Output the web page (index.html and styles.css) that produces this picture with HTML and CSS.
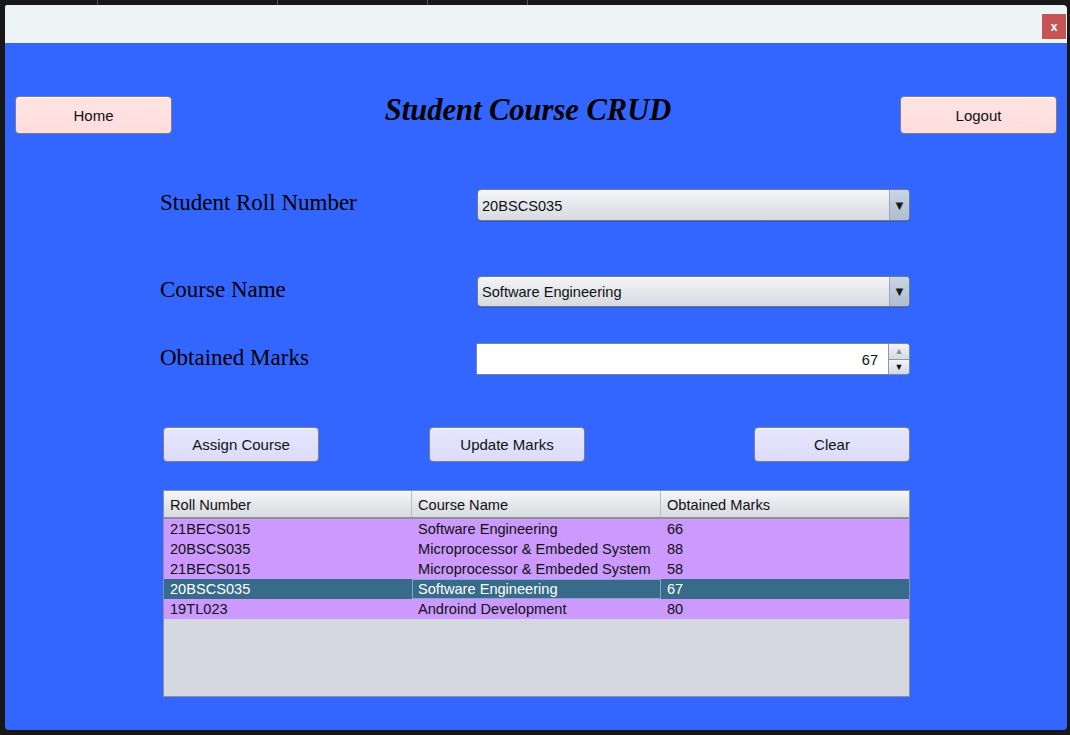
FILE: index.html
```html
<!DOCTYPE html>
<html>
<head>
<meta charset="utf-8">
<link rel="stylesheet" href="styles.css">
</head>
<body>
<div class="behind">
  <span class="seg s1"></span><span class="seg s2"></span><span class="seg s3"></span><span class="seg s4"></span><span class="seg s5"></span>
</div>
<div class="window">
  <div class="titlebar">
    <div class="close">x</div>
  </div>
  <div class="content">
    <div class="topbar">
      <button class="btn pink">Home</button>
      <h1 class="title">Student Course CRUD</h1>
      <button class="btn pink">Logout</button>
    </div>

    <div class="form">
      <div class="row r1">
        <label class="lbl">Student Roll Number</label>
        <div class="combo"><span class="combo-text">20BSCS035</span><span class="combo-arrow">&#9660;</span></div>
      </div>
      <div class="row r2">
        <label class="lbl">Course Name</label>
        <div class="combo"><span class="combo-text">Software Engineering</span><span class="combo-arrow">&#9660;</span></div>
      </div>
      <div class="row r3">
        <label class="lbl">Obtained Marks</label>
        <div class="spinner">
          <span class="spin-field">67</span>
          <span class="spin-btns"><span class="spin-up">&#9650;</span><span class="spin-down">&#9660;</span></span>
        </div>
      </div>
    </div>

    <div class="actions">
      <button class="btn lav">Assign Course</button>
      <button class="btn lav update">Update Marks</button>
      <button class="btn lav clear">Clear</button>
    </div>

    <div class="table">
      <div class="thead">
        <div class="th">Roll Number</div>
        <div class="th">Course Name</div>
        <div class="th">Obtained Marks</div>
      </div>
      <div class="tbody">
        <div class="tr"><div class="td">21BECS015</div><div class="td">Software Engineering</div><div class="td">66</div></div>
        <div class="tr"><div class="td">20BSCS035</div><div class="td">Microprocessor &amp; Embeded System</div><div class="td">88</div></div>
        <div class="tr"><div class="td">21BECS015</div><div class="td">Microprocessor &amp; Embeded System</div><div class="td">58</div></div>
        <div class="tr sel"><div class="td">20BSCS035</div><div class="td focus">Software Engineering</div><div class="td">67</div></div>
        <div class="tr"><div class="td">19TL023</div><div class="td">Androind Development</div><div class="td">80</div></div>
      </div>
    </div>
  </div>
</div>
</body>
</html>
```
FILE: styles.css
```css
* { box-sizing: border-box; }
html, body { margin: 0; padding: 0; }
body {
  background: #181818;
  width: 1070px;
  height: 735px;
  overflow: hidden;
  font-family: "Liberation Sans", Arial, sans-serif;
}
.behind {
  height: 5px;
  display: flex;
}
.seg { height: 5px; border-right: 1px solid #555; }
.s1 { width: 98px; }
.s2 { width: 180px; }
.s3 { width: 150px; }
.s4 { width: 100px; }
.s5 { width: 0; border: none; }

.window {
  margin-left: 5px;
  width: 1062px;
  height: 725px;
  border-radius: 2px 4px 4px 4px;
  overflow: hidden;
  display: flex;
  flex-direction: column;
}
.titlebar {
  height: 38px;
  background: #edf4f6;
  display: flex;
  justify-content: flex-end;
  align-items: flex-start;
  padding-top: 9px;
  padding-right: 1px;
}
.close {
  width: 24px;
  height: 25px;
  background: #c75454;
  color: #fff;
  font-size: 12px;
  font-weight: bold;
  display: flex;
  align-items: center;
  justify-content: center;
  line-height: 1;
}
.content {
  flex: 1;
  background: #3366ff;
  padding: 53px 10px 0 10px;
}
.topbar {
  display: grid;
  grid-template-columns: 157px 1fr 157px;
  height: 38px;
  align-items: start;
}
.btn {
  font-family: "Liberation Sans", Arial, sans-serif;
  font-size: 15px;
  color: #111;
  border: 1px solid #7c7f8c;
  border-radius: 4px;
  padding: 0;
  cursor: default;
  box-shadow: inset 0 1px 0 rgba(255,255,255,0.6);
}
.pink {
  height: 38px;
  padding-top: 1px;
  background: linear-gradient(#ffe4e4, #fddcdc);
}
.title {
  margin: 0;
  padding-right: 16px;
  text-align: center;
  font-family: "Liberation Serif", "Times New Roman", serif;
  font-style: italic;
  font-weight: bold;
  font-size: 30.5px;
  line-height: 30px;
  color: #000;
  margin-top: -1px;
}

.form { padding-left: 145px; }
.row {
  display: flex;
  align-items: center;
}
.r1 { margin-top: 55px; height: 32px; }
.r2 { margin-top: 55px; height: 31px; }
.r3 { margin-top: 36px; height: 32px; }
.lbl {
  width: 317px;
  font-family: "Liberation Serif", "Times New Roman", serif;
  font-size: 23px;
  color: #000;
  position: relative;
  top: -2px;
}
.r3 .lbl { top: -1px; }
.combo {
  width: 433px;
  height: 100%;
  border: 1px solid #6f7a8c;
  border-radius: 4px;
  background: linear-gradient(#f4f5f7 0%, #e6e8ec 45%, #d7dae0 100%);
  display: flex;
  overflow: hidden;
  box-shadow: 0 1px 0 rgba(0,0,0,0.15);
}
.combo-text {
  flex: 1;
  display: flex;
  align-items: center;
  padding-left: 4px;
  padding-top: 1px;
  font-size: 14.6px;
  color: #111;
}
.combo-arrow {
  width: 20px;
  border-left: 1px solid #9aa6b6;
  background: linear-gradient(#c9d5e3, #aebdd0);
  display: flex;
  align-items: center;
  justify-content: center;
  font-size: 13px;
  color: #1a1a1a;
}
.spinner {
  width: 434px;
  margin-left: -1px;
  height: 100%;
  display: flex;
  border: 1px solid #7a8598;
  border-radius: 2px 4px 4px 2px;
  overflow: hidden;
  background: #fff;
}
.spin-field {
  flex: 1;
  display: flex;
  align-items: center;
  justify-content: flex-end;
  padding-right: 10px;
  padding-top: 1px;
  font-size: 14.6px;
  color: #111;
  background: #fff;
}
.spin-btns {
  width: 21px;
  display: flex;
  flex-direction: column;
  border-left: 1px solid #8d99aa;
}
.spin-up, .spin-down {
  flex: 1;
  display: flex;
  align-items: center;
  justify-content: center;
  font-size: 9px;
  background: linear-gradient(#f2f4f7, #d3d9e2);
}
.spin-up { color: #8a8f98; border-bottom: 1px solid #8d99aa; }
.spin-down { color: #111; }

.actions {
  margin-top: 52px;
  margin-left: 148px;
  width: 747px;
  display: flex;
  height: 35px;
}
.lav {
  width: 156px;
  height: 35px;
  background: linear-gradient(#e6e6ff, #dcdcfa);
}
.update { margin-left: 110px; }
.clear { margin-left: auto; }

.table {
  margin-top: 28px;
  margin-left: 148px;
  width: 747px;
  height: 207px;
  border: 1px solid #8a909c;
  background: #d5d8e0;
  font-size: 14.6px;
}
.thead {
  display: grid;
  grid-template-columns: 248px 249px 1fr;
  height: 28px;
  background: linear-gradient(#f5f6f7, #e2e4e8 60%, #d8dbe0);
  border-bottom: 2px solid #8d8f94;
}
.th {
  display: flex;
  align-items: center;
  padding-left: 6px;
  color: #111;
  border-right: 1px solid #b9bdc5;
  padding-top: 1px;
}
.th:last-child { border-right: none; }
.tr {
  display: grid;
  grid-template-columns: 248px 249px 1fr;
  height: 20px;
  background: #cc99ff;
  color: #111;
}
.td {
  display: flex;
  align-items: center;
  padding-left: 6px;
  white-space: nowrap;
  overflow: hidden;
}
.sel { background: #386a8a; color: #fff; }
.focus { border: 1px solid #7fa8d2; padding-left: 5px; }
```
